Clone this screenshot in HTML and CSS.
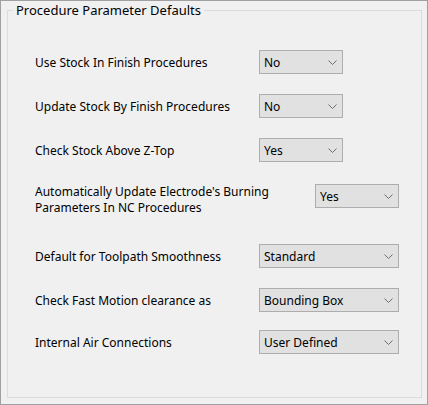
FILE: index.html
```html
<!DOCTYPE html>
<html>
<head>
<meta charset="utf-8">
<link rel="stylesheet" href="styles.css">
</head>
<body>
<div class="window">
  <fieldset class="group">
    <legend class="group-title">Procedure Parameter Defaults</legend>
    <div class="rows">
      <div class="row">
        <span class="label">Use Stock In Finish Procedures</span>
        <div class="combo combo-small"><span class="combo-text">No</span><svg class="chev" width="9" height="5" viewBox="0 0 9 5"><path d="M0.5 0.5 L4.5 4.5 L8.5 0.5" fill="none" stroke="#6e6e6e" stroke-width="1"/></svg></div>
      </div>
      <div class="row">
        <span class="label">Update Stock By Finish Procedures</span>
        <div class="combo combo-small"><span class="combo-text">No</span><svg class="chev" width="9" height="5" viewBox="0 0 9 5"><path d="M0.5 0.5 L4.5 4.5 L8.5 0.5" fill="none" stroke="#6e6e6e" stroke-width="1"/></svg></div>
      </div>
      <div class="row row-gap-22">
        <span class="label">Check Stock Above Z-Top</span>
        <div class="combo combo-small"><span class="combo-text">Yes</span><svg class="chev" width="9" height="5" viewBox="0 0 9 5"><path d="M0.5 0.5 L4.5 4.5 L8.5 0.5" fill="none" stroke="#6e6e6e" stroke-width="1"/></svg></div>
      </div>
      <div class="row row-tall">
        <span class="label label-wide"><span class="label-line">Automatically Update Electrode's Burning</span><span class="label-line">Parameters In NC Procedures</span></span>
        <div class="combo combo-small"><span class="combo-text">Yes</span><svg class="chev" width="9" height="5" viewBox="0 0 9 5"><path d="M0.5 0.5 L4.5 4.5 L8.5 0.5" fill="none" stroke="#6e6e6e" stroke-width="1"/></svg></div>
      </div>
      <div class="row">
        <span class="label">Default for Toolpath Smoothness</span>
        <div class="combo combo-wide"><span class="combo-text">Standard</span><svg class="chev" width="9" height="5" viewBox="0 0 9 5"><path d="M0.5 0.5 L4.5 4.5 L8.5 0.5" fill="none" stroke="#6e6e6e" stroke-width="1"/></svg></div>
      </div>
      <div class="row row-gap-18">
        <span class="label">Check Fast Motion clearance as</span>
        <div class="combo combo-wide"><span class="combo-text">Bounding Box</span><svg class="chev" width="9" height="5" viewBox="0 0 9 5"><path d="M0.5 0.5 L4.5 4.5 L8.5 0.5" fill="none" stroke="#6e6e6e" stroke-width="1"/></svg></div>
      </div>
      <div class="row">
        <span class="label">Internal Air Connections</span>
        <div class="combo combo-wide"><span class="combo-text">User Defined</span><svg class="chev" width="9" height="5" viewBox="0 0 9 5"><path d="M0.5 0.5 L4.5 4.5 L8.5 0.5" fill="none" stroke="#6e6e6e" stroke-width="1"/></svg></div>
      </div>
    </div>
  </fieldset>
</div>
</body>
</html>
```

FILE: styles.css
```css
html, body {
  margin: 0;
  padding: 0;
  background: #f0f0f0;
}

body {
  font-family: "Noto Sans", "Liberation Sans", sans-serif;
  font-size: 12px;
  color: #000;
}

.window {
  width: 428px;
  height: 405px;
  box-sizing: border-box;
  border: 1px solid #a0a0a0;
  background: #f0f0f0;
  display: flex;
  flex-direction: column;
}

.group {
  flex: 1;
  margin: 1px 5px 6px 6px;
  padding: 0 0 0 5px;
  border: 1px solid #dcdcdc;
  min-width: 0;
}

.group-title {
  padding: 0 3px;
  font-size: 13px;
  line-height: 16px;
  color: #000;
}

.rows {
  display: flex;
  flex-direction: column;
  margin: 32px 0 0 22px;
}

.row {
  display: flex;
  align-items: center;
  height: 24px;
  margin-bottom: 20px;
}

.row-gap-22 {
  margin-bottom: 22px;
}

.row-gap-18 {
  margin-bottom: 18px;
}

.row-tall {
  align-items: flex-start;
  margin-bottom: 36px;
}

.label {
  width: 224px;
  flex: none;
  line-height: 15px;
  white-space: nowrap;
}

.label-wide {
  width: 280px;
  display: flex;
  flex-direction: column;
  gap: 0;
}

.label-line {
  display: block;
  line-height: 16px;
}

.combo {
  box-sizing: border-box;
  height: 24px;
  border: 1px solid #adadad;
  background: #e1e1e1;
  display: flex;
  align-items: center;
  padding: 0 5px 0 4px;
}

.combo-small {
  width: 84px;
}

.combo-wide {
  width: 140px;
}

.combo-text {
  flex: 1;
  line-height: 15px;
}

.chev {
  display: block;
  flex: none;
  margin-top: 1px;
}
```
